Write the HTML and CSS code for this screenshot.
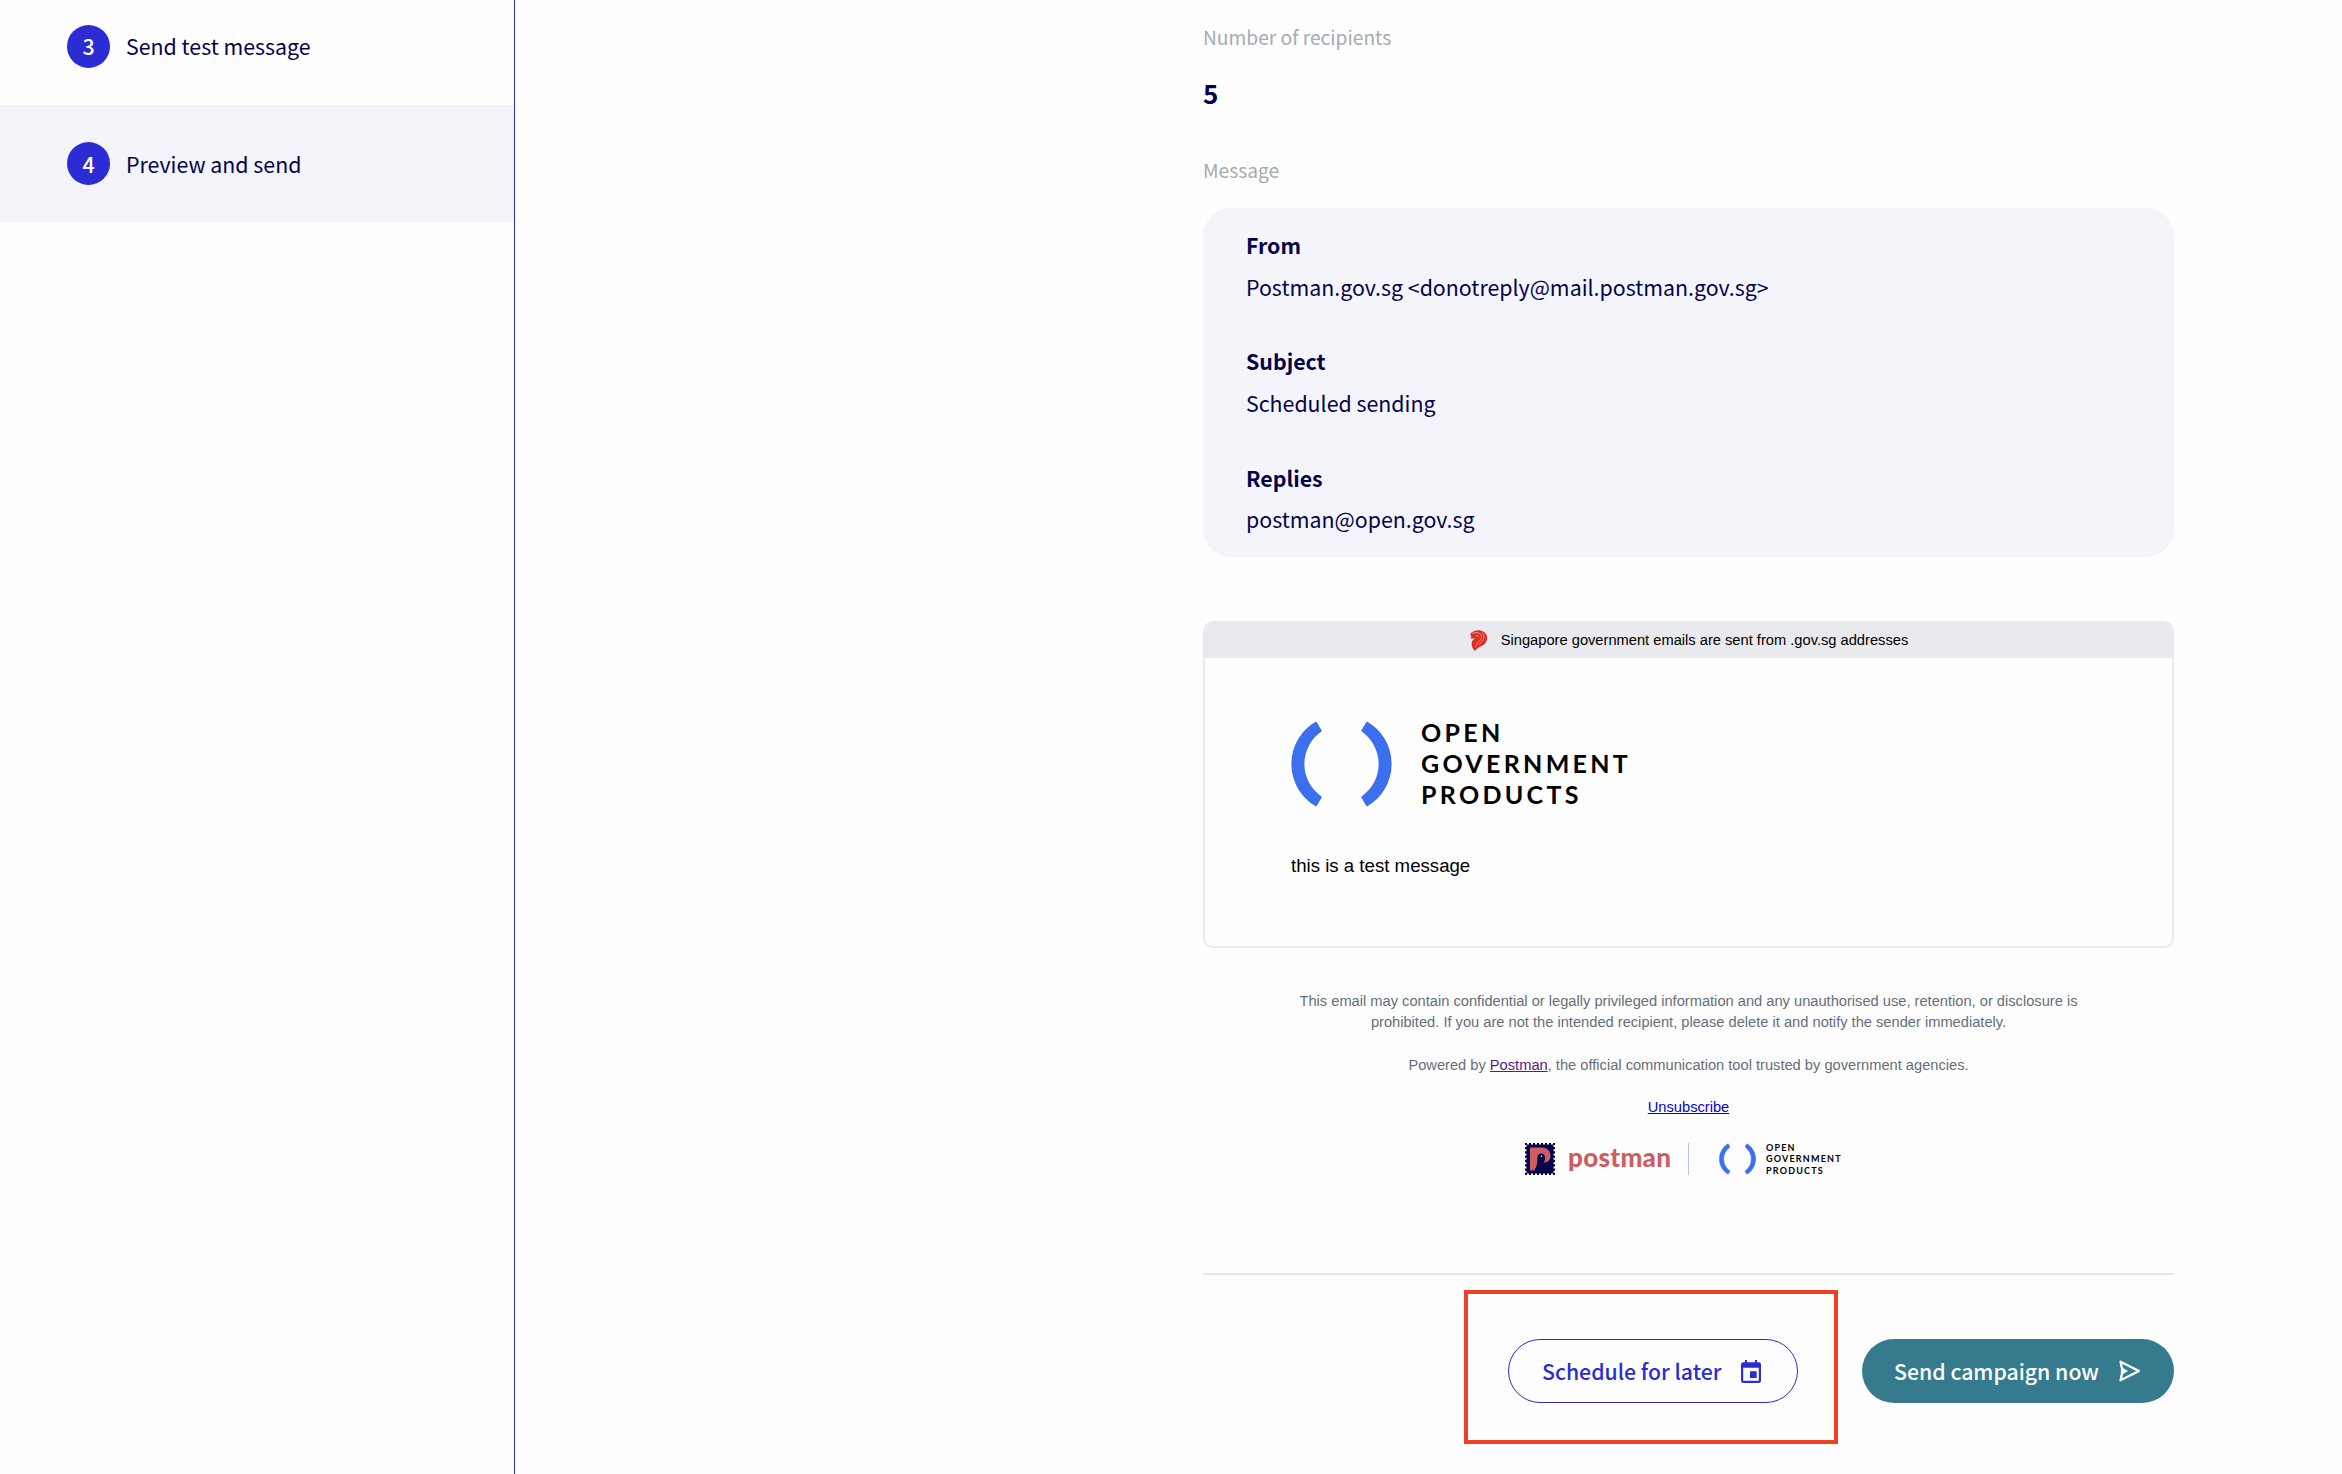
FILE: index.html
```html
<!DOCTYPE html>
<html lang="en">
<head>
<meta charset="utf-8">
<title>Preview and send</title>
<link rel="stylesheet" href="styles.css">
</head>
<body>
<div class="page">
  <nav class="steps">
    <div class="step"><span class="badge">3</span><span class="step-name">Send test message</span></div>
    <div class="step active"><span class="badge">4</span><span class="step-name">Preview and send</span></div>
  </nav>
  <main class="content">
    <div class="label">Number of recipients</div>
    <div class="count"><b>5</b></div>
    <div class="label message-label">Message</div>
    <section class="details">
      <h5>From</h5><p>Postman.gov.sg &lt;donotreply@mail.postman.gov.sg&gt;</p>
      <h5>Subject</h5><p>Scheduled sending</p>
      <h5>Replies</h5><p>postman@open.gov.sg</p>
    </section>
    <section class="email">
      <div class="masthead">
        <svg class="lion" viewBox="0 0 18 21"><path fill="#db2f25" d="M1 3C4 0 10-1 14 2C18 5 18 10 15 13.500C12 17 7 17 5 21C2 18 .5 14 2.500 10.500L5 8.500L.5 8.500L1.500 6L0 5Z"/><path d="M2 3.500C7 1.500 11 3 11.500 6C12 10 7 12 5.500 17M12 2.500C16 6 14 10 9 14.500M6 5.500L8.500 6.500" fill="none" stroke="#f3b4b0" stroke-width=".7"/></svg>
        <span>Singapore government emails are sent from .gov.sg addresses</span>
      </div>
      <div class="body">
        <div class="ogp">
          <svg class="ogp-mark" viewBox="0 0 101 86"><path d="M25 1.500A48 48 0 0 0 25 84.500L30 76A40 40 0 0 1 30 10ZM76 1.500A48 48 0 0 1 76 84.500L71 76A40 40 0 0 0 71 10Z"/></svg>
          <div class="ogp-name"><span>OPEN</span><span>GOVERNMENT</span><span>PRODUCTS</span></div>
        </div>
        <p class="text">this is a test message</p>
      </div>
    </section>
    <footer class="legal">
      <p>This email may contain confidential or legally privileged information and any unauthorised use, retention, or disclosure is<br>prohibited. If you are not the intended recipient, please delete it and notify the sender immediately.</p>
      <p>Powered by <a class="visited">Postman</a>, the official communication tool trusted by government agencies.</p>
      <p><a class="link">Unsubscribe</a></p>
    </footer>
    <div class="brands">
      <svg class="stamp" viewBox="0 0 30 32"><path fill="#03034c" d="M0 0H30V32H0Z"/><path d="M0 0H30M0 32H30" stroke="#fff" stroke-width="3" stroke-dasharray="2 2" stroke-dashoffset="-2"/><path d="M0 0V32M30 0V32" stroke="#fff" stroke-width="3" stroke-dasharray="2 2.290" stroke-dashoffset="-2"/><path fill="#d05c63" d="M5 4.500H16.500C22 4.500 25.500 8 25.500 13C25.500 17 23 19.500 18.500 19.500C20.500 17 20.500 14.500 19.500 12.500C18 9.500 13 10 12.500 14C12.200 19 12.500 23 9 27.500H5Z"/><circle cx="16.500" cy="13.200" r=".8" fill="#fff"/></svg>
      <span class="postman">postman</span>
      <span class="divider"></span>
      <div class="ogp small">
        <svg class="ogp-mark" viewBox="0 0 101 86"><path d="M25 1.500A48 48 0 0 0 25 84.500L30 76A40 40 0 0 1 30 10ZM76 1.500A48 48 0 0 1 76 84.500L71 76A40 40 0 0 0 71 10Z"/></svg>
        <div class="ogp-name"><span>OPEN</span><span>GOVERNMENT</span><span>PRODUCTS</span></div>
      </div>
    </div>
    <div class="actions">
      <div class="highlight"><button class="btn outline"><span>Schedule for later</span>
        <svg class="cal" viewBox="0 0 20 23"><path fill="currentColor" fill-rule="evenodd" d="M4 0H6V2.300H14V0H16V2.300H17.700Q20 2.300 20 4.600V20.700Q20 23 17.700 23H2.300Q0 23 0 20.700V4.600Q0 2.300 2.300 2.300H4ZM2.200 7.700V20.800H17.800V7.700ZM9 11.300H15.700V18H9Z"/></svg></button></div>
      <button class="btn solid"><span>Send campaign now</span>
        <svg class="send" viewBox="0 0 22 22"><path fill="none" stroke="currentColor" stroke-width="2.300" stroke-linejoin="round" d="M1.500 1.700L20 11L1.500 20.300L3 13.500V8.500Z"/><path fill="currentColor" d="M2.500 7L9 11L2.500 15Z"/></svg></button>
    </div>
  </main>
</div>
</body>
</html>
```
FILE: styles.css
```css
* { box-sizing: border-box; }
body { margin: 0; background: #fefefe; }
h5, p { margin: 0; }
.page { display: flex; height: 1474px; overflow: hidden; font-family: "Noto Sans CJK SC", sans-serif; color: #03034c; }
.steps { width: 515px; flex: none; border-right: 1px solid #2c2cdc; margin-top: -12px; }
.step { display: flex; align-items: center; gap: 16px; height: 117px; padding-left: 67px; font-size: 21.350px; }
.step.active { background: #f4f5fb; }
.step-name { padding-bottom: 2px; }
.active .step-name, .active .badge { padding-bottom: 0; }
.badge { width: 43px; height: 43px; border-radius: 50%; background: #2c2cd4; color: #fff; display: flex; align-items: center; justify-content: center; padding-bottom: 2px; font-weight: 500; }
.content { width: 971px; margin-left: 688px; flex: none; }
.label { color: #a5abb3; font-size: 19.200px; line-height: 30px; padding-top: 22px; height: 76px; }
.count { font-size: 26px; line-height: 34px; height: 57px; }
.message-label { height: 75px; }
.details { height: 349px; border-radius: 28px; background: #f4f5fb; padding: 16px 43px; font-size: 21.350px; line-height: 41.700px; }
.details h5 { font-size: 21.350px; }
.details p { margin-bottom: 32.900px; }
.email { margin-top: 64px; height: 327px; border: 2px solid #e9eaee; border-radius: 10px; overflow: hidden; font-family: "Liberation Sans", sans-serif; color: #000; }
.masthead { height: 35px; background: #e9eaee; display: flex; justify-content: center; align-items: center; gap: 13px; font-size: 14.680px; padding: 0 0 1px 1px; }
.lion { width: 18px; height: 21px; }
.body { padding: 63px 86px; }
.ogp { display: flex; gap: 29px; }
.ogp-mark { width: 101px; height: 86px; overflow: visible; fill: #3b6fed; stroke: #3b6fed; stroke-width: 1.500px; stroke-linejoin: round; }
.ogp-name { display: flex; flex-direction: column; font: 700 25px/31px Lato, sans-serif; letter-spacing: 3.300px; color: #000; margin-top: -4px; }
.text { font-size: 18.650px; line-height: 22px; margin-top: 45px; }
.legal { margin-top: 43px; text-align: center; color: #646e7c; font: 14.670px/21.300px "Liberation Sans", sans-serif; }
.legal p { margin-bottom: 21px; }
.legal p:last-child { margin-bottom: 25px; }
a { text-decoration: underline; }
.visited { color: #551a8b; }
.link { color: #0000ee; }
.brands { display: flex; align-items: center; height: 32px; margin-left: 322px; }
.stamp { width: 30px; height: 32px; }
.postman { font: 900 26px/32px Lato, sans-serif; letter-spacing: .3px; color: #d05c63; margin: -4px 0 0 13px; width: 104px; }
.divider { width: 1px; height: 32px; background: #b7c2f2; margin-left: 16px; }
.small { margin-left: 30px; gap: 10px; align-items: center; }
.small .ogp-mark { width: 37px; height: 32px; }
.small .ogp-name { font-size: 9px; line-height: 11.500px; letter-spacing: 1.200px; margin: 0; }
.actions { margin-top: 98px; border-top: 2px solid #e3e5fb; display: flex; justify-content: flex-end; padding-top: 15px; }
.highlight { width: 374px; height: 154px; border: 4px solid #ee4026; padding: 45px 0 0 40px; margin-right: 24px; }
.btn { height: 64px; border-radius: 32px; font: 500 21.250px/32px "Noto Sans CJK SC", sans-serif; display: flex; align-items: center; border: 0; padding: 0 33px 0 32px; white-space: nowrap; }
.outline { width: 290px; background: #fefefe; color: #2c2cd4; border: 1px solid #2c2cd4; padding: 0 36px 0 33px; justify-content: space-between; }
.solid { width: 312px; background: #367b8d; color: #fff; margin-top: 49px; justify-content: space-between; }
.cal { width: 20px; height: 23px; }
.send { width: 22px; height: 22px; }
```
